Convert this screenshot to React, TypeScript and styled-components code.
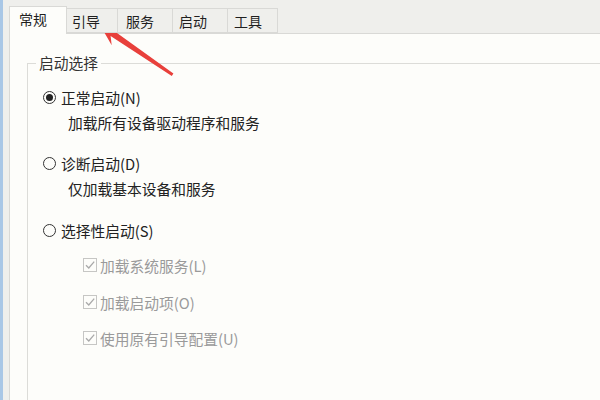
import React from 'react';
import styled, { createGlobalStyle } from 'styled-components';

const Global = createGlobalStyle`
  html, body { margin: 0; padding: 0; width: 600px; height: 400px; overflow: hidden; }
  body { font-family: "Noto Sans CJK SC", "Noto Sans", sans-serif; }
`;

const Window = styled.div`
  position: relative;
  width: 600px;
  height: 400px;
  box-sizing: border-box;
  border-left: 3px solid #a9c7e6;
  background: #efefec;
  display: flex;
  flex-direction: column;
  overflow: hidden;
`;

const TabStrip = styled.div`
  display: flex;
  align-items: flex-end;
  height: 33px;
  padding-left: 6px;
  box-sizing: border-box;
`;

const Tab = styled.div<{ $w: number; $pad: number; $active?: boolean }>`
  width: ${p => p.$w}px;
  height: ${p => (p.$active ? 28 : 25)}px;
  box-sizing: border-box;
  margin-left: -1px;
  margin-bottom: ${p => (p.$active ? -1 : 0)}px;
  border: 1px solid #d9d9d6;
  border-bottom: ${p => (p.$active ? 'none' : '1px solid #d9d9d6')};
  background: ${p => (p.$active ? '#fdfdfa' : '#efefec')};
  position: relative;
  z-index: ${p => (p.$active ? 2 : 1)};
  display: flex;
  align-items: center;
  justify-content: flex-start;
  padding-left: ${p => p.$pad}px;
  padding-bottom: ${p => (p.$active ? 3 : 0)}px;
  font-size: 14px;
  color: #1f1f1f;
  &:first-child { margin-left: 0; }
`;

const Panel = styled.div`
  flex: 1;
  margin-left: 6px;
  border-left: 1px solid #d9d9d6;
  border-top: 1px solid #d9d9d6;
  background: #fdfdfa;
  padding: 19px 0 0 17px;
  display: flex;
`;

const GroupBox = styled.fieldset`
  flex: 1;
  margin: 0;
  padding: 0;
  border: 1px solid #dcdcd8;
  border-right: none;
  border-bottom: none;
  min-width: 0;
`;

const Legend = styled.legend`
  margin-left: 8px;
  padding: 0 3px;
  font-size: 14.75px;
  line-height: 20px;
  color: #333;
`;

const Content = styled.div`
  display: flex;
  flex-direction: column;
  padding-left: 15px;
`;

const Row = styled.div<{ $gap: number; $indent?: number }>`
  display: flex;
  align-items: center;
  height: 24px;
  margin-top: ${p => p.$gap}px;
  margin-left: ${p => p.$indent ?? 0}px;
  font-size: 14.75px;
  white-space: nowrap;
`;

const Label = styled.span<{ $disabled?: boolean }>`
  color: ${p => (p.$disabled ? '#9a9a9a' : '#222')};
`;

const RadioCircle = styled.span<{ $checked?: boolean }>`
  width: 13px;
  height: 13px;
  box-sizing: border-box;
  border: 1px solid #333;
  border-radius: 50%;
  margin-right: 5px;
  display: flex;
  align-items: center;
  justify-content: center;
  flex-shrink: 0;
  &::after {
    content: '';
    display: ${p => (p.$checked ? 'block' : 'none')};
    width: 7px;
    height: 7px;
    border-radius: 50%;
    background: #222;
  }
`;

const CheckBox = styled.span`
  width: 14px;
  height: 14px;
  box-sizing: border-box;
  border: 1px solid #c6c6c4;
  margin-right: 3px;
  display: flex;
  align-items: center;
  justify-content: center;
  flex-shrink: 0;
  background: #fdfdfa;
`;

const Overlay = styled.svg`
  position: absolute;
  left: -3px;
  top: 0;
  pointer-events: none;
`;

const Check = () => (
  <svg width="12" height="12" viewBox="0 0 12 12">
    <path d="M2 6.2 L4.8 9 L10.2 2.6" fill="none" stroke="#a9a9a9" strokeWidth="1.3" />
  </svg>
);

const tabs: { label: string; w: number; pad: number; active?: boolean }[] = [
  { label: '常规', w: 58, pad: 9, active: true },
  { label: '引导', w: 52, pad: 5 },
  { label: '服务', w: 56, pad: 8 },
  { label: '启动', w: 56, pad: 6 },
  { label: '工具', w: 51, pad: 6 },
];

export default function App() {
  return (
    <>
      <Global />
      <Window>
        <TabStrip>
          {tabs.map(t => (
            <Tab key={t.label} $w={t.w} $pad={t.pad} $active={t.active}>{t.label}</Tab>
          ))}
        </TabStrip>
        <Panel>
          <GroupBox>
            <Legend>启动选择</Legend>
            <Content>
              <Row $gap={12}><RadioCircle $checked /><Label>正常启动(N)</Label></Row>
              <Row $gap={1} $indent={25}><Label>加载所有设备驱动程序和服务</Label></Row>
              <Row $gap={17}><RadioCircle /><Label>诊断启动(D)</Label></Row>
              <Row $gap={1} $indent={25}><Label>仅加载基本设备和服务</Label></Row>
              <Row $gap={18}><RadioCircle /><Label>选择性启动(S)</Label></Row>
              <Row $gap={11} $indent={40}><CheckBox><Check /></CheckBox><Label $disabled>加载系统服务(L)</Label></Row>
              <Row $gap={13} $indent={40}><CheckBox><Check /></CheckBox><Label $disabled>加载启动项(O)</Label></Row>
              <Row $gap={12} $indent={40}><CheckBox><Check /></CheckBox><Label $disabled>使用原有引导配置(U)</Label></Row>
            </Content>
          </GroupBox>
        </Panel>
        <Overlay width="600" height="400" viewBox="0 0 600 400">
          <polygon
            points="100,25 123,28.6 114.2,30.9 173.4,73.5 171.8,75.9 110.6,36.1 111.7,45.2"
            fill="#e8403b"
          />
        </Overlay>
      </Window>
    </>
  );
}
